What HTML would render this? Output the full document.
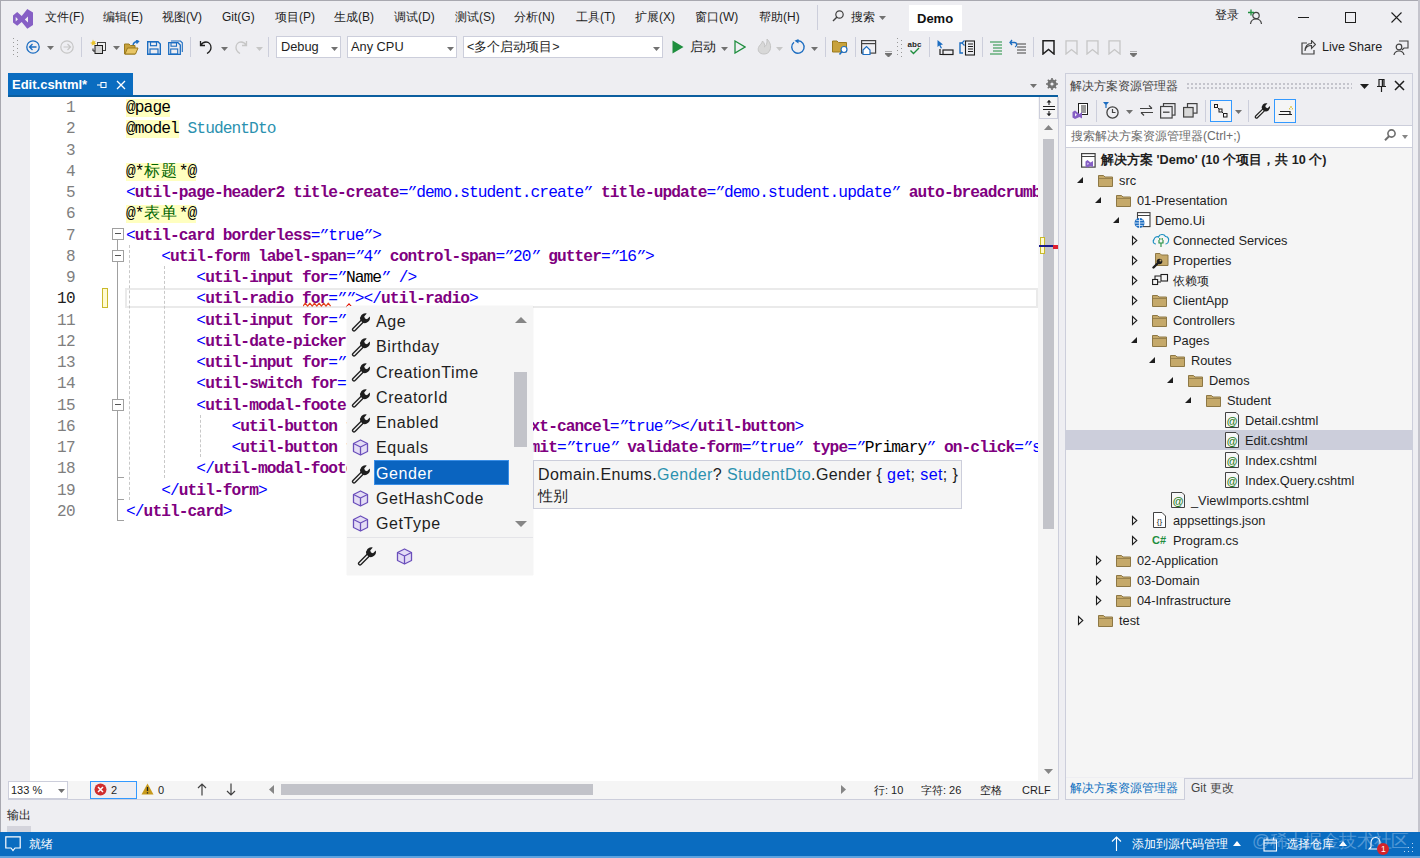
<!DOCTYPE html><html><head><meta charset="utf-8"><style>
*{box-sizing:border-box;margin:0;padding:0}
html,body{width:1420px;height:858px;overflow:hidden;background:#EEEEF2;font-family:"Liberation Sans",sans-serif;color:#1E1E1E;font-size:12px;position:relative}
.a{position:absolute}
.t{position:absolute;white-space:nowrap;line-height:1}
.code{position:absolute;font-family:"Liberation Mono",monospace;font-size:16.2px;letter-spacing:-0.92px;white-space:pre;height:21px;line-height:23px;color:#000}
.cj{display:inline-block;width:17.6px;letter-spacing:0;font-size:16px;text-align:left}
.tg{color:#800080;font-weight:bold}
.q{display:inline-block;width:8.8px;letter-spacing:0;transform:skewX(-28deg) scaleY(0.85);transform-origin:50% 30%;font-weight:normal}
.dl{color:#0000FF}
.vl{color:#0000FF}
.ra{background:#FFFFC0}
.cm{color:#006400}
.ty{color:#2B91AF}
.ln{position:absolute;left:30px;width:45px;text-align:right;font-family:"Liberation Mono",monospace;font-size:16px;letter-spacing:-0.6px;color:#6F6F6F;height:21px;line-height:23px}
.tr{position:absolute;font-size:12.8px;line-height:1;white-space:nowrap;color:#1E1E1E}
.cb{position:absolute;background:#fff;border:1px solid #CCCEDB;height:22px}
.pi{position:absolute;font-size:16px;letter-spacing:0.6px;line-height:1;white-space:nowrap;color:#1E1E1E}
</style></head><body>
<div class="a" style="left:0px;top:0px;width:1420px;height:1px;background:#A8A8B0;"></div>
<div class="a" style="left:0px;top:0px;width:1px;height:858px;background:#A8A8B0;"></div>
<div class="a" style="left:1418px;top:0px;width:2px;height:858px;background:#C4C4CC;"></div>
<svg class="a" style="left:13px;top:9px;" width="20" height="20" viewBox="0 0 20 20"><path d="M0 6.5 L4.2 3 L8.7 7 L14.3 0 L20 3.5 V16 L14.3 19.8 L8.7 13 L4.2 16.7 L0 13.5 Z M2.7 8 L5 10.2 L2.7 12.5 Z M15 7.5 L11.8 10.5 L15 13.5 Z" fill="#865FC5" fill-rule="evenodd"/></svg>
<div class="t" style="left:45px;top:11px;">文件(F)</div>
<div class="t" style="left:103px;top:11px;">编辑(E)</div>
<div class="t" style="left:162px;top:11px;">视图(V)</div>
<div class="t" style="left:222px;top:11px;">Git(G)</div>
<div class="t" style="left:275px;top:11px;">项目(P)</div>
<div class="t" style="left:334px;top:11px;">生成(B)</div>
<div class="t" style="left:394px;top:11px;">调试(D)</div>
<div class="t" style="left:455px;top:11px;">测试(S)</div>
<div class="t" style="left:514px;top:11px;">分析(N)</div>
<div class="t" style="left:576px;top:11px;">工具(T)</div>
<div class="t" style="left:635px;top:11px;">扩展(X)</div>
<div class="t" style="left:695px;top:11px;">窗口(W)</div>
<div class="t" style="left:759px;top:11px;">帮助(H)</div>
<div class="a" style="left:817px;top:5px;width:1px;height:25px;background:#CCCEDB"></div>
<svg class="a" style="left:832px;top:10px;" width="12" height="12" viewBox="0 0 12 12"><circle cx="7.5" cy="4.5" r="3.7" fill="none" stroke="#424242" stroke-width="1.2"/><path d="M5 7 L1 11" stroke="#424242" stroke-width="1.5"/></svg>
<div class="t" style="left:851px;top:11px;">搜索</div>
<svg class="a" style="left:879px;top:16px;" width="7" height="4" viewBox="0 0 7 4"><path d="M0 0H7L3.5 4Z" fill="#717171"/></svg>
<div class="a" style="left:909px;top:5px;width:53px;height:26px;background:#FFFFFF;"></div>
<div class="t" style="left:917px;top:11.5px;font-weight:bold;font-size:13px;color:#111">Demo</div>
<div class="t" style="left:1215px;top:9px;">登录</div>
<svg class="a" style="left:1247px;top:9px;" width="16" height="16" viewBox="0 0 16 16"><circle cx="9" cy="6.5" r="3.2" fill="none" stroke="#424242" stroke-width="1.2"/><path d="M3.5 15 C4 11 6.5 10 9 10 C11.5 10 14 11 14.5 15" fill="none" stroke="#424242" stroke-width="1.2"/><path d="M1 3.5 H7 M4 0.5 V6.5" stroke="#1E8E3E" stroke-width="1.3"/></svg>
<div class="a" style="left:1298px;top:17px;width:11px;height:1px;background:#1E1E1E;"></div>
<svg class="a" style="left:1345px;top:12px;" width="11" height="11" viewBox="0 0 11 11"><rect x="0.5" y="0.5" width="10" height="10" fill="none" stroke="#1E1E1E" stroke-width="1"/></svg>
<svg class="a" style="left:1391px;top:12px;" width="11" height="11" viewBox="0 0 11 11"><path d="M0.5 0.5 L10.5 10.5 M10.5 0.5 L0.5 10.5" stroke="#1E1E1E" stroke-width="1.1"/></svg>
<div class="a" style="left:13px;top:38px;width:1px;height:1px;background:#999"></div>
<div class="a" style="left:17px;top:40px;width:1px;height:1px;background:#999"></div>
<div class="a" style="left:13px;top:42px;width:1px;height:1px;background:#999"></div>
<div class="a" style="left:17px;top:44px;width:1px;height:1px;background:#999"></div>
<div class="a" style="left:13px;top:46px;width:1px;height:1px;background:#999"></div>
<div class="a" style="left:17px;top:48px;width:1px;height:1px;background:#999"></div>
<div class="a" style="left:13px;top:50px;width:1px;height:1px;background:#999"></div>
<div class="a" style="left:17px;top:52px;width:1px;height:1px;background:#999"></div>
<div class="a" style="left:13px;top:54px;width:1px;height:1px;background:#999"></div>
<div class="a" style="left:17px;top:56px;width:1px;height:1px;background:#999"></div>
<svg class="a" style="left:26px;top:40px;" width="14" height="14" viewBox="0 0 14 14"><circle cx="7" cy="7" r="6.2" fill="none" stroke="#1C6DC1" stroke-width="1.3"/><path d="M10.5 7 H3.5 M6.5 4 L3.5 7 L6.5 10" fill="none" stroke="#1C6DC1" stroke-width="1.3"/></svg>
<svg class="a" style="left:47px;top:46px;" width="7" height="4" viewBox="0 0 7 4"><path d="M0 0H7L3.5 4Z" fill="#717171"/></svg>
<svg class="a" style="left:60px;top:40px;" width="14" height="14" viewBox="0 0 14 14"><circle cx="7" cy="7" r="6.2" fill="none" stroke="#C6C6C6" stroke-width="1.2"/><path d="M3.5 7 H10.5 M7.5 4 L10.5 7 L7.5 10" fill="none" stroke="#C6C6C6" stroke-width="1.2"/></svg>
<div class="a" style="left:81px;top:37px;width:1px;height:20px;background:#CCCEDB"></div>
<svg class="a" style="left:90px;top:39px;" width="17" height="17" viewBox="0 0 17 17"><path d="M3 0.5 L3.8 2.4 L5.8 1.7 L4.8 3.5 L6.6 4.5 L4.6 4.9 L4.8 7 L3.3 5.6 L1.6 6.8 L2 4.8 L0 4 L2 3.2 Z" fill="#E8C228"/><rect x="7.5" y="3.5" width="8" height="8" fill="#F0F0F0" stroke="#424242"/><rect x="5" y="6.5" width="7.5" height="8" fill="#D4D4D4" stroke="#1E1E1E"/><path d="M3 9.5 V12 H5" fill="none" stroke="#1E1E1E"/></svg>
<svg class="a" style="left:113px;top:46px;" width="7" height="4" viewBox="0 0 7 4"><path d="M0 0H7L3.5 4Z" fill="#717171"/></svg>
<svg class="a" style="left:124px;top:40px;" width="17" height="15" viewBox="0 0 17 15"><path d="M0.5 4 H5 L6.5 5.5 H11 V14 H0.5 Z" fill="#C8A23C" stroke="#9A7A1E"/><path d="M1 14 L3.5 8 H14 L11.5 14 Z" fill="#E8C565" stroke="#9A7A1E"/><path d="M9 5 C9.5 2.5 11.5 1.5 14 1.5 M12 0 L14.5 1.5 L12.5 3.5" fill="none" stroke="#1C6DC1" stroke-width="1.4"/></svg>
<svg class="a" style="left:147px;top:41px;" width="14" height="14" viewBox="0 0 14 14"><path d="M0.7 0.7 H11 L13.3 3 V13.3 H0.7 Z" fill="none" stroke="#1C6DC1" stroke-width="1.4"/><rect x="3.5" y="0.7" width="6" height="4" fill="none" stroke="#1C6DC1" stroke-width="1.2"/><rect x="3" y="8" width="8" height="5.3" fill="none" stroke="#1C6DC1" stroke-width="1.2"/></svg>
<svg class="a" style="left:168px;top:40px;" width="15" height="15" viewBox="0 0 15 15"><path d="M3 1 H12.5 L14.3 2.8 V12" fill="none" stroke="#1C6DC1" stroke-width="1.1"/><path d="M0.7 2.7 H10 L12.3 5 V14.3 H0.7 Z" fill="none" stroke="#1C6DC1" stroke-width="1.3"/><rect x="3" y="2.7" width="5.5" height="3.5" fill="none" stroke="#1C6DC1" stroke-width="1.1"/><rect x="2.7" y="9" width="7" height="5" fill="none" stroke="#1C6DC1" stroke-width="1.1"/></svg>
<div class="a" style="left:190px;top:37px;width:1px;height:20px;background:#CCCEDB"></div>
<svg class="a" style="left:199px;top:40px;" width="13" height="14" viewBox="0 0 13 14"><path d="M1.5 1 V5.5 H6 M1.8 5.3 C3 3 5 2 7 2 C10 2 12 4.5 12 7.5 C12 10 10.5 12 8 13.5" fill="none" stroke="#1E1E1E" stroke-width="1.3"/></svg>
<svg class="a" style="left:221px;top:47px;" width="7" height="4" viewBox="0 0 7 4"><path d="M0 0H7L3.5 4Z" fill="#717171"/></svg>
<svg class="a" style="left:234px;top:40px;" width="14" height="14" viewBox="0 0 14 14"><path d="M12.5 1 V5.5 H8 M12.2 5.3 C11 3 9 2 7 2 C4 2 2 4.5 2 7.5 C2 10 3.5 12 6 13.5" fill="none" stroke="#C6C6C6" stroke-width="1.3"/></svg>
<svg class="a" style="left:256px;top:47px;" width="7" height="4" viewBox="0 0 7 4"><path d="M0 0H7L3.5 4Z" fill="#C6C6C6"/></svg>
<div class="a" style="left:268px;top:37px;width:1px;height:20px;background:#CCCEDB"></div>
<div class="cb" style="left:276px;top:36px;width:65px"></div>
<div class="t" style="left:281px;top:41px;font-size:12.8px">Debug</div>
<svg class="a" style="left:331px;top:47px;" width="7" height="4" viewBox="0 0 7 4"><path d="M0 0H7L3.5 4Z" fill="#717171"/></svg>
<div class="cb" style="left:347px;top:36px;width:110px"></div>
<div class="t" style="left:351px;top:41px;font-size:12.8px">Any CPU</div>
<svg class="a" style="left:447px;top:47px;" width="7" height="4" viewBox="0 0 7 4"><path d="M0 0H7L3.5 4Z" fill="#717171"/></svg>
<div class="cb" style="left:463px;top:36px;width:200px"></div>
<div class="t" style="left:467px;top:41px;font-size:12.5px">&lt;多个启动项目&gt;</div>
<svg class="a" style="left:653px;top:47px;" width="7" height="4" viewBox="0 0 7 4"><path d="M0 0H7L3.5 4Z" fill="#717171"/></svg>
<svg class="a" style="left:672px;top:40px;" width="12" height="14" viewBox="0 0 12 14"><path d="M0.5 0.5 L11.5 7 L0.5 13.5 Z" fill="#1E8E3E"/></svg>
<div class="t" style="left:690px;top:41px;font-size:12.5px">启动</div>
<svg class="a" style="left:721px;top:47px;" width="7" height="4" viewBox="0 0 7 4"><path d="M0 0H7L3.5 4Z" fill="#717171"/></svg>
<svg class="a" style="left:734px;top:40px;" width="12" height="14" viewBox="0 0 12 14"><path d="M1 1 L11 7 L1 13 Z" fill="none" stroke="#1E8E3E" stroke-width="1.3"/></svg>
<svg class="a" style="left:756px;top:38px;" width="16" height="17" viewBox="0 0 16 17"><path d="M8 16 C3 16 1.5 12.5 2.5 9.5 C3.5 6.5 6 6 6.5 3 C8.5 5 9 7 8.5 9 C10 8 11.5 5.5 11 1 C14 4 15.5 8 14 12 C13 14.5 11 16 8 16 Z" fill="#D8D8D8" stroke="#C4C4C4"/></svg>
<svg class="a" style="left:776px;top:47px;" width="7" height="4" viewBox="0 0 7 4"><path d="M0 0H7L3.5 4Z" fill="#C6C6C6"/></svg>
<svg class="a" style="left:790px;top:39px;" width="16" height="16" viewBox="0 0 16 16"><path d="M4 3.2 A6.2 6.2 0 1 0 8 1.8" fill="none" stroke="#1C6DC1" stroke-width="1.4"/><path d="M8.5 0 V4.5 L4.5 1.8 Z" fill="#1C6DC1"/></svg>
<svg class="a" style="left:811px;top:47px;" width="7" height="4" viewBox="0 0 7 4"><path d="M0 0H7L3.5 4Z" fill="#717171"/></svg>
<div class="a" style="left:825px;top:37px;width:1px;height:20px;background:#CCCEDB"></div>
<svg class="a" style="left:832px;top:39px;" width="17" height="17" viewBox="0 0 17 17"><path d="M0.5 2 H5 L6.5 3.5 H14.5 V13 H0.5 Z" fill="#C8A23C" stroke="#9A7A1E"/><circle cx="12" cy="10.5" r="3" fill="#fff" stroke="#1C6DC1" stroke-width="1.2"/><path d="M10 12.5 L7.5 15.5" stroke="#1C6DC1" stroke-width="1.5"/></svg>
<div class="a" style="left:855px;top:37px;width:1px;height:20px;background:#CCCEDB"></div>
<svg class="a" style="left:861px;top:40px;" width="17" height="15" viewBox="0 0 17 15"><rect x="0.6" y="0.6" width="14" height="12.5" fill="none" stroke="#424242" stroke-width="1.2"/><path d="M0.6 3.6 H14.6" stroke="#424242" stroke-width="1.2"/><path d="M2 10 L5.5 6.5 L9 10 V14.5 H2 Z" fill="#fff" stroke="#1C6DC1" stroke-width="1.2"/></svg>
<svg class="a" style="left:885px;top:51px;" width="7" height="6" viewBox="0 0 7 6"><path d="M0 0 H7 M0 2.5 H7 L3.5 6 Z" stroke="#717171" fill="#717171"/></svg>
<div class="a" style="left:897px;top:38px;width:1px;height:1px;background:#999"></div>
<div class="a" style="left:901px;top:40px;width:1px;height:1px;background:#999"></div>
<div class="a" style="left:897px;top:42px;width:1px;height:1px;background:#999"></div>
<div class="a" style="left:901px;top:44px;width:1px;height:1px;background:#999"></div>
<div class="a" style="left:897px;top:46px;width:1px;height:1px;background:#999"></div>
<div class="a" style="left:901px;top:48px;width:1px;height:1px;background:#999"></div>
<div class="a" style="left:897px;top:50px;width:1px;height:1px;background:#999"></div>
<div class="a" style="left:901px;top:52px;width:1px;height:1px;background:#999"></div>
<div class="a" style="left:897px;top:54px;width:1px;height:1px;background:#999"></div>
<div class="a" style="left:901px;top:56px;width:1px;height:1px;background:#999"></div>
<svg class="a" style="left:906px;top:39px;" width="17" height="17" viewBox="0 0 17 17"><text x="8.5" y="8" font-family="Liberation Sans" font-size="8" font-weight="bold" fill="#1E1E1E" text-anchor="middle">abc</text><path d="M4.5 11.5 L7.5 14.5 L13 9" fill="none" stroke="#1E8E3E" stroke-width="1.4"/></svg>
<div class="a" style="left:929px;top:37px;width:1px;height:20px;background:#CCCEDB"></div>
<svg class="a" style="left:937px;top:40px;" width="17" height="16" viewBox="0 0 17 16"><path d="M0.5 0 L6 4.5 L3.5 5 L5 8 L3.8 8.5 L2.3 5.5 L0.5 7 Z" fill="#1C6DC1"/><path d="M3 9 V14.5 H16" fill="none" stroke="#1E1E1E" stroke-width="1.2"/><rect x="6" y="10" width="10" height="4.5" fill="none" stroke="#1E1E1E" stroke-width="1.2"/></svg>
<svg class="a" style="left:959px;top:40px;" width="16" height="16" viewBox="0 0 16 16"><path d="M4 3 H1 V13 H4" fill="none" stroke="#1C6DC1" stroke-width="1.4"/><path d="M3 3 L5.5 0.5 M3 3 L5.5 5.5" stroke="#1C6DC1" stroke-width="1.2"/><rect x="6.5" y="1" width="9" height="14" fill="none" stroke="#1E1E1E" stroke-width="1.1"/><path d="M9 4 H14 M9 6.5 H14 M9 9 H14 M9 11.5 H14" stroke="#1E1E1E"/></svg>
<div class="a" style="left:982px;top:37px;width:1px;height:20px;background:#CCCEDB"></div>
<svg class="a" style="left:990px;top:41px;" width="14" height="14" viewBox="0 0 14 14"><path d="M0 1 H12 M3 4 H12 M3 7 H12 M3 10 H12 M0 13 H12" stroke="#1E8E3E" stroke-width="1.2"/></svg>
<svg class="a" style="left:1009px;top:39px;" width="18" height="16" viewBox="0 0 18 16"><path d="M3 1 L1 3.5 L3 6 M1.5 3.5 H5.5 C8 3.5 8.5 7 6 8" fill="none" stroke="#1C6DC1" stroke-width="1.3"/><path d="M8 5 H17 M8 8 H17 M8 11 H17 M8 14 H17" stroke="#424242" stroke-width="1.1"/></svg>
<div class="a" style="left:1033px;top:37px;width:1px;height:20px;background:#CCCEDB"></div>
<svg class="a" style="left:1042px;top:40px;" width="13" height="15" viewBox="0 0 13 15"><path d="M1 0.8 H12 V14 L6.5 9.5 L1 14 Z" fill="none" stroke="#1E1E1E" stroke-width="1.5"/></svg>
<svg class="a" style="left:1064px;top:40px;" width="14" height="15" viewBox="0 0 14 15"><path d="M2 0.8 H13 V14 L7.5 9.5 L2 14 Z" fill="none" stroke="#C6C6C6" stroke-width="1.3"/></svg>
<svg class="a" style="left:1085px;top:40px;" width="14" height="15" viewBox="0 0 14 15"><path d="M2 0.8 H13 V14 L7.5 9.5 L2 14 Z" fill="none" stroke="#C6C6C6" stroke-width="1.3"/></svg>
<svg class="a" style="left:1107px;top:40px;" width="14" height="15" viewBox="0 0 14 15"><path d="M2 0.8 H13 V14 L7.5 9.5 L2 14 Z" fill="none" stroke="#C6C6C6" stroke-width="1.3"/></svg>
<svg class="a" style="left:1130px;top:51px;" width="7" height="6" viewBox="0 0 7 6"><path d="M0 0 H7 M0 2.5 H7 L3.5 6 Z" stroke="#717171" fill="#717171"/></svg>
<svg class="a" style="left:1301px;top:40px;" width="15" height="15" viewBox="0 0 15 15"><path d="M6 3 H1 V14 H13 V10" fill="none" stroke="#424242" stroke-width="1.2"/><path d="M4 11 C4.5 7 7 5.5 10.5 5.5 V8.5 L14.5 4.5 L10.5 0.5 V3.5 C6 3.5 4 6.5 4 11 Z" fill="none" stroke="#424242" stroke-width="1.1"/></svg>
<div class="t" style="left:1322px;top:41px;font-size:12.6px">Live Share</div>
<svg class="a" style="left:1393px;top:40px;" width="16" height="16" viewBox="0 0 16 16"><circle cx="6" cy="7" r="2.8" fill="none" stroke="#424242" stroke-width="1.2"/><path d="M1 15 C1.5 12 3.5 11 6 11 C8.5 11 10.5 12 11 15" fill="none" stroke="#424242" stroke-width="1.2"/><path d="M6 1 H15 V8 H11 L9 10" fill="none" stroke="#424242" stroke-width="1.1"/></svg>
<div class="a" style="left:8px;top:73px;width:125px;height:24px;background:#0A6CC0;"></div>
<div class="t" style="left:12px;top:78px;color:#fff;font-weight:bold;font-size:13px">Edit.cshtml*</div>
<svg class="a" style="left:97px;top:81px;" width="10" height="8" viewBox="0 0 10 8"><path d="M0 4 H4 M4 1 V7 M4 1.5 H9 V6.5 H4" fill="none" stroke="#fff" stroke-width="1.1"/></svg>
<svg class="a" style="left:116px;top:80px;" width="10" height="10" viewBox="0 0 10 10"><path d="M1 1 L9 9 M9 1 L1 9" stroke="#fff" stroke-width="1.3"/></svg>
<div class="a" style="left:8px;top:95px;width:1050px;height:2px;background:#0B5E9F;"></div>
<svg class="a" style="left:1030px;top:84px;" width="7" height="4" viewBox="0 0 7 4"><path d="M0 0H7L3.5 4Z" fill="#717171"/></svg>
<svg class="a" style="left:1046px;top:78px;" width="12" height="12" viewBox="0 0 12 12"><circle cx="6" cy="6" r="3.5" fill="none" stroke="#717171" stroke-width="2.2"/><path d="M6 0 V12 M0 6 H12 M1.8 1.8 L10.2 10.2 M10.2 1.8 L1.8 10.2" stroke="#717171" stroke-width="1.6"/><circle cx="6" cy="6" r="1.6" fill="#EEEEF2"/></svg>
<div class="a" style="left:8px;top:97px;width:1032px;height:684px;background:#FFFFFF;"></div>
<div class="a" style="left:8px;top:97px;width:22px;height:684px;background:#EEEEF2;"></div>
<div class="a" style="left:125px;top:288px;width:913px;height:20px;border:2px solid #EAEAEA"></div>
<div class="a" style="left:102px;top:288px;width:6px;height:20px;border:1px solid #C9B92A;background:#FFFBD0"></div>
<div class="a" style="left:112px;top:228px;width:12px;height:12px;border:1px solid #A0A0A0;background:#fff"></div>
<div class="a" style="left:115px;top:233px;width:6px;height:1px;background:#555;"></div>
<div class="a" style="left:112px;top:250px;width:12px;height:12px;border:1px solid #A0A0A0;background:#fff"></div>
<div class="a" style="left:115px;top:255px;width:6px;height:1px;background:#555;"></div>
<div class="a" style="left:112px;top:399px;width:12px;height:12px;border:1px solid #A0A0A0;background:#fff"></div>
<div class="a" style="left:115px;top:404px;width:6px;height:1px;background:#555;"></div>
<div class="a" style="left:117px;top:240px;width:1px;height:10px;background:#A0A0A0;"></div>
<div class="a" style="left:117px;top:262px;width:1px;height:137px;background:#A0A0A0;"></div>
<div class="a" style="left:117px;top:411px;width:1px;height:110px;background:#A0A0A0;"></div>
<div class="a" style="left:117px;top:520px;width:7px;height:1px;background:#A0A0A0;"></div>
<div class="a" style="left:117px;top:499px;width:7px;height:1px;background:#A0A0A0;"></div>
<div class="a" style="left:117px;top:477px;width:7px;height:1px;background:#A0A0A0;"></div>
<div class="a" style="left:129px;top:245px;width:1px;height:255px;border-left:1px dashed #C8C8C8"></div>
<div class="a" style="left:164px;top:266px;width:1px;height:212px;border-left:1px dashed #C8C8C8"></div>
<div class="a" style="left:200px;top:415px;width:1px;height:42px;border-left:1px dashed #C8C8C8"></div>
<div class="a" style="left:0;top:0;width:1039px;height:778px;overflow:hidden">
<div class="ln" style="top:97.00px;color:#7E7E7E">1</div>
<div class="code" style="left:126px;top:97.00px"><span class="ra">@page</span></div>
<div class="ln" style="top:118.26px;color:#7E7E7E">2</div>
<div class="code" style="left:126px;top:118.26px"><span class="ra">@model</span> <span class="ty">StudentDto</span></div>
<div class="ln" style="top:139.53px;color:#7E7E7E">3</div>
<div class="code" style="left:126px;top:139.53px"></div>
<div class="ln" style="top:160.79px;color:#7E7E7E">4</div>
<div class="code" style="left:126px;top:160.79px"><span class="ra">@*<span class="cm"><span class="cj">标</span><span class="cj">题</span></span>*@</span></div>
<div class="ln" style="top:182.05px;color:#7E7E7E">5</div>
<div class="code" style="left:126px;top:182.05px"><span class="dl">&lt;</span><span class="tg">util-page-header2 title-create</span><span class="dl">=</span><span class="vl"><span class="q">&quot;</span>demo.student.create<span class="q">&quot;</span></span> <span class="tg">title-update</span><span class="dl">=</span><span class="vl"><span class="q">&quot;</span>demo.student.update<span class="q">&quot;</span></span> <span class="tg">auto-breadcrumb=<span class="q">&quot;</span>true<span class="q">&quot;</span></span></div>
<div class="ln" style="top:203.31px;color:#7E7E7E">6</div>
<div class="code" style="left:126px;top:203.31px"><span class="ra">@*<span class="cm"><span class="cj">表</span><span class="cj">单</span></span>*@</span></div>
<div class="ln" style="top:224.58px;color:#7E7E7E">7</div>
<div class="code" style="left:126px;top:224.58px"><span class="dl">&lt;</span><span class="tg">util-card borderless</span><span class="dl">=</span><span class="vl"><span class="q">&quot;</span>true<span class="q">&quot;</span></span><span class="dl">&gt;</span></div>
<div class="ln" style="top:245.84px;color:#7E7E7E">8</div>
<div class="code" style="left:126px;top:245.84px">    <span class="dl">&lt;</span><span class="tg">util-form label-span</span><span class="dl">=</span><span class="vl"><span class="q">&quot;</span>4<span class="q">&quot;</span></span> <span class="tg">control-span</span><span class="dl">=</span><span class="vl"><span class="q">&quot;</span>20<span class="q">&quot;</span></span> <span class="tg">gutter</span><span class="dl">=</span><span class="vl"><span class="q">&quot;</span>16<span class="q">&quot;</span></span><span class="dl">&gt;</span></div>
<div class="ln" style="top:267.10px;color:#7E7E7E">9</div>
<div class="code" style="left:126px;top:267.10px">        <span class="dl">&lt;</span><span class="tg">util-input for</span><span class="dl">=</span><span class="vl"><span class="q">&quot;</span></span>Name<span class="vl"><span class="q">&quot;</span></span> <span class="dl">/&gt;</span></div>
<div class="ln" style="top:288.37px;color:#1E1E1E">10</div>
<div class="code" style="left:126px;top:288.37px">        <span class="dl">&lt;</span><span class="tg">util-radio for</span><span class="dl">=</span><span class="vl"><span class="q">&quot;</span><span class="q">&quot;</span></span><span class="dl">&gt;&lt;/</span><span class="tg">util-radio</span><span class="dl">&gt;</span></div>
<div class="ln" style="top:309.63px;color:#7E7E7E">11</div>
<div class="code" style="left:126px;top:309.63px">        <span class="dl">&lt;</span><span class="tg">util-input for</span><span class="dl">=</span><span class="vl"><span class="q">&quot;</span></span></div>
<div class="ln" style="top:330.89px;color:#7E7E7E">12</div>
<div class="code" style="left:126px;top:330.89px">        <span class="dl">&lt;</span><span class="tg">util-date-picker for</span><span class="dl">=</span></div>
<div class="ln" style="top:352.16px;color:#7E7E7E">13</div>
<div class="code" style="left:126px;top:352.16px">        <span class="dl">&lt;</span><span class="tg">util-input for</span><span class="dl">=</span><span class="vl"><span class="q">&quot;</span></span></div>
<div class="ln" style="top:373.42px;color:#7E7E7E">14</div>
<div class="code" style="left:126px;top:373.42px">        <span class="dl">&lt;</span><span class="tg">util-switch for</span><span class="dl">=</span></div>
<div class="ln" style="top:394.68px;color:#7E7E7E">15</div>
<div class="code" style="left:126px;top:394.68px">        <span class="dl">&lt;</span><span class="tg">util-modal-footer</span></div>
<div class="ln" style="top:415.95px;color:#7E7E7E">16</div>
<div class="code" style="left:126px;top:415.95px">            <span class="dl">&lt;</span><span class="tg">util-button text=<span class="q">&quot;</span>Cancel12345<span class="q">&quot;</span> te</span><span class="tg">xt-cancel</span><span class="dl">=</span><span class="vl"><span class="q">&quot;</span>true<span class="q">&quot;</span></span><span class="dl">&gt;&lt;/</span><span class="tg">util-button</span><span class="dl">&gt;</span></div>
<div class="ln" style="top:437.21px;color:#7E7E7E">17</div>
<div class="code" style="left:126px;top:437.21px">            <span class="dl">&lt;</span><span class="tg">util-button text=<span class="q">&quot;</span>Ok12345<span class="q">&quot;</span> is-sub</span><span class="tg">mit</span><span class="dl">=</span><span class="vl"><span class="q">&quot;</span>true<span class="q">&quot;</span></span> <span class="tg">validate-form</span><span class="dl">=</span><span class="vl"><span class="q">&quot;</span>true<span class="q">&quot;</span></span> <span class="tg">type</span><span class="dl">=</span><span class="vl"><span class="q">&quot;</span></span>Primary<span class="vl"><span class="q">&quot;</span></span> <span class="tg">on-click</span><span class="dl">=</span><span class="vl"><span class="q">&quot;</span>submit<span class="q">&quot;</span></span></div>
<div class="ln" style="top:458.47px;color:#7E7E7E">18</div>
<div class="code" style="left:126px;top:458.47px">        <span class="dl">&lt;/</span><span class="tg">util-modal-footer</span></div>
<div class="ln" style="top:479.73px;color:#7E7E7E">19</div>
<div class="code" style="left:126px;top:479.73px">    <span class="dl">&lt;/</span><span class="tg">util-form</span><span class="dl">&gt;</span></div>
<div class="ln" style="top:501.00px;color:#7E7E7E">20</div>
<div class="code" style="left:126px;top:501.00px"><span class="dl">&lt;/</span><span class="tg">util-card</span><span class="dl">&gt;</span></div>
</div>
<svg class="a" style="left:303px;top:302px;" width="29" height="6" viewBox="0 0 29 6"><path d="M0 4.2 L2.3 1.2 L4.6 4.2 L6.9 1.2 L9.2 4.2 L11.5 1.2 L13.8 4.2 L16.1 1.2 L18.4 4.2 L20.7 1.2 L23.0 4.2 L25.3 1.2 L27.6 4.2" fill="none" stroke="#E3401A" stroke-width="1.2" stroke-linejoin="round"/></svg>
<svg class="a" style="left:346px;top:303px;" width="6" height="4" viewBox="0 0 6 4"><path d="M0.5 3.5 L3 0.8 L5.5 3.5" fill="none" stroke="#E51400" stroke-width="1.1"/></svg>
<div class="a" style="left:1038px;top:97px;width:20px;height:684px;background:#F5F5F5;"></div>
<div class="a" style="left:1058px;top:97px;width:1px;height:703px;background:#CCCEDB;"></div>
<div class="a" style="left:1039px;top:97px;width:19px;height:22px;border:1px solid #CCCEDB;border-top:none;background:#F5F5F5"></div>
<svg class="a" style="left:1043px;top:100px;" width="12" height="16" viewBox="0 0 12 16"><path d="M0 6.5 H12 M0 9.5 H12" stroke="#1E1E1E" stroke-width="1.1"/><path d="M6 0.5 V5 M6 11 V15.5" stroke="#1E1E1E" stroke-width="1.1"/><path d="M3.5 2.5 L6 0 L8.5 2.5 Z M3.5 13.5 L6 16 L8.5 13.5 Z" fill="#1E1E1E"/></svg>
<svg class="a" style="left:1044px;top:125px;" width="9" height="5" viewBox="0 0 9 5"><path d="M0 5H9L4.5 0Z" fill="#868686"/></svg>
<div class="a" style="left:1043px;top:139px;width:11px;height:390px;background:#C2C3C9;"></div>
<svg class="a" style="left:1044px;top:769px;" width="9" height="5" viewBox="0 0 9 5"><path d="M0 0 H9 L4.5 5 Z" fill="#868686"/></svg>
<div class="a" style="left:1040px;top:237px;width:5px;height:17px;border:1px solid #C9B92A;background:#FFFBD0"></div>
<div class="a" style="left:1039px;top:245px;width:19px;height:2px;background:#1A1A8C;"></div>
<div class="a" style="left:1053px;top:245px;width:5px;height:4px;background:#E0202E;"></div>
<div class="a" style="left:8px;top:781px;width:1050px;height:19px;background:#F5F5F5;"></div>
<div class="a" style="left:8px;top:799px;width:1050px;height:1px;background:#CCCEDB;"></div>
<div class="a" style="left:8px;top:781px;width:60px;height:18px;background:#fff;border:1px solid #CCCEDB"></div>
<div class="t" style="left:11px;top:785px;font-size:11px">133 %</div>
<svg class="a" style="left:58px;top:789px;" width="7" height="4" viewBox="0 0 7 4"><path d="M0 0H7L3.5 4Z" fill="#717171"/></svg>
<div class="a" style="left:90px;top:781px;width:47px;height:18px;border:1px solid #3399FF;background:#EEEEF2"></div>
<svg class="a" style="left:94px;top:783px;" width="13" height="13" viewBox="0 0 13 13"><circle cx="6.5" cy="6.5" r="6" fill="#D02E2E"/><path d="M4 4 L9 9 M9 4 L4 9" stroke="#fff" stroke-width="1.5"/></svg>
<div class="t" style="left:111px;top:785px;font-size:11px">2</div>
<svg class="a" style="left:141px;top:783px;" width="13" height="12" viewBox="0 0 13 12"><path d="M6.5 0.5 L12.5 11.5 H0.5 Z" fill="#C79A1C"/><path d="M6.5 4 V8 M6.5 9.2 V10.5" stroke="#1E1E1E" stroke-width="1.3"/></svg>
<div class="t" style="left:158px;top:785px;font-size:11px">0</div>
<svg class="a" style="left:197px;top:783px;" width="10" height="13" viewBox="0 0 10 13"><path d="M5 1 V12.5 M1 5 L5 1 L9 5" fill="none" stroke="#424242" stroke-width="1.2"/></svg>
<svg class="a" style="left:226px;top:783px;" width="10" height="13" viewBox="0 0 10 13"><path d="M5 0.5 V12 M1 8 L5 12 L9 8" fill="none" stroke="#424242" stroke-width="1.2"/></svg>
<svg class="a" style="left:269px;top:785px;" width="5" height="9" viewBox="0 0 5 9"><path d="M5 0 V9 L0 4.5 Z" fill="#868686"/></svg>
<div class="a" style="left:281px;top:784px;width:312px;height:11px;background:#C2C3C9;"></div>
<svg class="a" style="left:841px;top:785px;" width="5" height="9" viewBox="0 0 5 9"><path d="M0 0 V9 L5 4.5 Z" fill="#868686"/></svg>
<div class="t" style="left:874px;top:785px;font-size:11px">行: 10</div>
<div class="t" style="left:921px;top:785px;font-size:11px">字符: 26</div>
<div class="t" style="left:980px;top:785px;font-size:11px">空格</div>
<div class="t" style="left:1022px;top:785px;font-size:11px">CRLF</div>
<div class="t" style="left:7px;top:809px;font-size:12px">输出</div>
<div class="a" style="left:7px;top:826px;width:24px;height:6px;background:#D4D4DC;"></div>
<div class="a" style="left:347px;top:306px;width:186px;height:269px;background:#F5F5F5;box-shadow:0 0 1px rgba(0,0,0,0.12)"></div>
<svg class="a" style="left:351px;top:312px;" width="20" height="20" viewBox="0 0 20 20"><g transform="scale(1.0)"><path d="M3 17.5 L11.2 9.3" stroke="#1E1E1E" stroke-width="4.2" stroke-linecap="round"/><path d="M3 17.5 L11.2 9.3" stroke="#F0F0F0" stroke-width="1.6" stroke-linecap="round"/><path d="M9.5 8.5 A5.2 5.2 0 0 1 15.8 1.6 L13.2 4.6 L14 6.6 L16 7.3 L18.8 4.6 A5.2 5.2 0 0 1 11.6 10.6 Z" fill="#1E1E1E"/></g></svg>
<div class="pi" style="left:376px;top:314.0px">Age</div>
<svg class="a" style="left:351px;top:337px;" width="20" height="20" viewBox="0 0 20 20"><g transform="scale(1.0)"><path d="M3 17.5 L11.2 9.3" stroke="#1E1E1E" stroke-width="4.2" stroke-linecap="round"/><path d="M3 17.5 L11.2 9.3" stroke="#F0F0F0" stroke-width="1.6" stroke-linecap="round"/><path d="M9.5 8.5 A5.2 5.2 0 0 1 15.8 1.6 L13.2 4.6 L14 6.6 L16 7.3 L18.8 4.6 A5.2 5.2 0 0 1 11.6 10.6 Z" fill="#1E1E1E"/></g></svg>
<div class="pi" style="left:376px;top:339.2px">Birthday</div>
<svg class="a" style="left:351px;top:362px;" width="20" height="20" viewBox="0 0 20 20"><g transform="scale(1.0)"><path d="M3 17.5 L11.2 9.3" stroke="#1E1E1E" stroke-width="4.2" stroke-linecap="round"/><path d="M3 17.5 L11.2 9.3" stroke="#F0F0F0" stroke-width="1.6" stroke-linecap="round"/><path d="M9.5 8.5 A5.2 5.2 0 0 1 15.8 1.6 L13.2 4.6 L14 6.6 L16 7.3 L18.8 4.6 A5.2 5.2 0 0 1 11.6 10.6 Z" fill="#1E1E1E"/></g></svg>
<div class="pi" style="left:376px;top:364.5px">CreationTime</div>
<svg class="a" style="left:351px;top:388px;" width="20" height="20" viewBox="0 0 20 20"><g transform="scale(1.0)"><path d="M3 17.5 L11.2 9.3" stroke="#1E1E1E" stroke-width="4.2" stroke-linecap="round"/><path d="M3 17.5 L11.2 9.3" stroke="#F0F0F0" stroke-width="1.6" stroke-linecap="round"/><path d="M9.5 8.5 A5.2 5.2 0 0 1 15.8 1.6 L13.2 4.6 L14 6.6 L16 7.3 L18.8 4.6 A5.2 5.2 0 0 1 11.6 10.6 Z" fill="#1E1E1E"/></g></svg>
<div class="pi" style="left:376px;top:389.8px">CreatorId</div>
<svg class="a" style="left:351px;top:413px;" width="20" height="20" viewBox="0 0 20 20"><g transform="scale(1.0)"><path d="M3 17.5 L11.2 9.3" stroke="#1E1E1E" stroke-width="4.2" stroke-linecap="round"/><path d="M3 17.5 L11.2 9.3" stroke="#F0F0F0" stroke-width="1.6" stroke-linecap="round"/><path d="M9.5 8.5 A5.2 5.2 0 0 1 15.8 1.6 L13.2 4.6 L14 6.6 L16 7.3 L18.8 4.6 A5.2 5.2 0 0 1 11.6 10.6 Z" fill="#1E1E1E"/></g></svg>
<div class="pi" style="left:376px;top:415.0px">Enabled</div>
<svg class="a" style="left:352px;top:439px;" width="17" height="17" viewBox="0 0 17 17"><g transform="scale(1.0)" stroke="#6B4FBB" stroke-width="1.3" stroke-linejoin="round" fill="none"><path d="M8.5 1 L15.5 4.5 V12.5 L8.5 16 L1.5 12.5 V4.5 Z" fill="#E4DDF5"/><path d="M1.5 4.5 L8.5 8 L15.5 4.5 M8.5 8 V16"/></g></svg>
<div class="pi" style="left:376px;top:440.2px">Equals</div>
<svg class="a" style="left:351px;top:464px;" width="20" height="20" viewBox="0 0 20 20"><g transform="scale(1.0)"><path d="M3 17.5 L11.2 9.3" stroke="#1E1E1E" stroke-width="4.2" stroke-linecap="round"/><path d="M3 17.5 L11.2 9.3" stroke="#F0F0F0" stroke-width="1.6" stroke-linecap="round"/><path d="M9.5 8.5 A5.2 5.2 0 0 1 15.8 1.6 L13.2 4.6 L14 6.6 L16 7.3 L18.8 4.6 A5.2 5.2 0 0 1 11.6 10.6 Z" fill="#1E1E1E"/></g></svg>
<div class="a" style="left:374px;top:460px;width:135px;height:25px;background:#0A64C0;border:1px solid #3A8EE6"></div>
<div class="pi" style="left:376px;top:465.5px;color:#fff">Gender</div>
<svg class="a" style="left:352px;top:490px;" width="17" height="17" viewBox="0 0 17 17"><g transform="scale(1.0)" stroke="#6B4FBB" stroke-width="1.3" stroke-linejoin="round" fill="none"><path d="M8.5 1 L15.5 4.5 V12.5 L8.5 16 L1.5 12.5 V4.5 Z" fill="#E4DDF5"/><path d="M1.5 4.5 L8.5 8 L15.5 4.5 M8.5 8 V16"/></g></svg>
<div class="pi" style="left:376px;top:490.8px">GetHashCode</div>
<svg class="a" style="left:352px;top:515px;" width="17" height="17" viewBox="0 0 17 17"><g transform="scale(1.0)" stroke="#6B4FBB" stroke-width="1.3" stroke-linejoin="round" fill="none"><path d="M8.5 1 L15.5 4.5 V12.5 L8.5 16 L1.5 12.5 V4.5 Z" fill="#E4DDF5"/><path d="M1.5 4.5 L8.5 8 L15.5 4.5 M8.5 8 V16"/></g></svg>
<div class="pi" style="left:376px;top:516.0px">GetType</div>
<svg class="a" style="left:515px;top:317px;" width="12" height="6" viewBox="0 0 12 6"><path d="M0 6H12L6.0 0Z" fill="#868686"/></svg>
<div class="a" style="left:514px;top:372px;width:13px;height:75px;background:#C2C3C9;"></div>
<svg class="a" style="left:515px;top:521px;" width="12" height="6" viewBox="0 0 12 6"><path d="M0 0 H12 L6 6 Z" fill="#868686"/></svg>
<div class="a" style="left:347px;top:537px;width:186px;height:1px;background:#E4E4E8;"></div>
<svg class="a" style="left:357px;top:546px;" width="20" height="20" viewBox="0 0 20 20"><g transform="scale(1.0)"><path d="M3 17.5 L11.2 9.3" stroke="#1E1E1E" stroke-width="4.2" stroke-linecap="round"/><path d="M3 17.5 L11.2 9.3" stroke="#F0F0F0" stroke-width="1.6" stroke-linecap="round"/><path d="M9.5 8.5 A5.2 5.2 0 0 1 15.8 1.6 L13.2 4.6 L14 6.6 L16 7.3 L18.8 4.6 A5.2 5.2 0 0 1 11.6 10.6 Z" fill="#1E1E1E"/></g></svg>
<svg class="a" style="left:396px;top:548px;" width="17" height="17" viewBox="0 0 17 17"><g transform="scale(1.0)" stroke="#6B4FBB" stroke-width="1.3" stroke-linejoin="round" fill="none"><path d="M8.5 1 L15.5 4.5 V12.5 L8.5 16 L1.5 12.5 V4.5 Z" fill="#E4DDF5"/><path d="M1.5 4.5 L8.5 8 L15.5 4.5 M8.5 8 V16"/></g></svg>
<div class="a" style="left:533px;top:460px;width:429px;height:49px;background:#F5F5F5;border:1px solid #CCCEDB"></div>
<div class="t" style="left:538px;top:467px;font-size:16px;letter-spacing:0.4px">Domain.Enums.<span style="color:#2B91AF">Gender</span>? <span style="color:#2B91AF">StudentDto</span>.Gender { <span style="color:#0000FF">get</span>; <span style="color:#0000FF">set</span>; }</div>
<div class="t" style="left:538px;top:488px;font-size:15px">性别</div>
<div class="a" style="left:1065px;top:73px;width:348px;height:706px;background:#EEEEF2;border:1px solid #CCCEDB;border-bottom:none"></div>
<div class="t" style="left:1070px;top:80px;font-size:12px;color:#444">解决方案资源管理器</div>
<div class="a" style="left:1186px;top:82px;width:166px;height:8px;background-image:radial-gradient(#C4C4CC 0.75px, transparent 0.9px);background-size:4px 4px"></div>
<svg class="a" style="left:1360px;top:84px;" width="9" height="5" viewBox="0 0 9 5"><path d="M0 0 H9 L4.5 5 Z" fill="#1E1E1E"/></svg>
<svg class="a" style="left:1377px;top:79px;" width="9" height="13" viewBox="0 0 9 13"><path d="M2 0.5 H7 V7.5 H2 Z M0 7.5 H9 M4.5 7.5 V13" fill="none" stroke="#1E1E1E" stroke-width="1.2"/><path d="M5.5 0.5 V7" stroke="#1E1E1E" stroke-width="1.5"/></svg>
<svg class="a" style="left:1394px;top:80px;" width="11" height="11" viewBox="0 0 11 11"><path d="M1 1 L10 10 M10 1 L1 10" stroke="#1E1E1E" stroke-width="1.5"/></svg>
<svg class="a" style="left:1072px;top:103px;" width="17" height="16" viewBox="0 0 17 16"><rect x="6.5" y="0.5" width="9" height="11" fill="#fff" stroke="#1E1E1E"/><path d="M9 3 H14 M9 5 H14 M9 7 H14 M9 9 H14" stroke="#1E1E1E" stroke-width="0.9"/><path d="M0.5 9 L3 7.5 L7.5 11 L10 9 V15.5 L7.5 14 L3 16 L0.5 14.5 Z M3 10 V13.5 L5 11.8 Z" fill="#865FC5" fill-rule="evenodd"/></svg>
<div class="a" style="left:1096px;top:100px;width:1px;height:22px;background:#CCCEDB"></div>
<svg class="a" style="left:1103px;top:102px;" width="16" height="17" viewBox="0 0 16 17"><path d="M0 0 H6 L3 3.5 Z" fill="#1C6DC1"/><path d="M3 3 V6" stroke="#1C6DC1" stroke-width="1.2"/><circle cx="9.5" cy="10.5" r="5.6" fill="none" stroke="#424242" stroke-width="1.3"/><path d="M9.5 7 V10.5 H12.5" fill="none" stroke="#424242" stroke-width="1.2"/></svg>
<svg class="a" style="left:1126px;top:110px;" width="7" height="4" viewBox="0 0 7 4"><path d="M0 0H7L3.5 4Z" fill="#717171"/></svg>
<svg class="a" style="left:1140px;top:105px;" width="13" height="11" viewBox="0 0 13 11"><path d="M0 3.5 H12 M9 0.5 L12 3.5 M13 7.5 H1 M4 10.5 L1 7.5" fill="none" stroke="#424242" stroke-width="1.2"/></svg>
<svg class="a" style="left:1160px;top:103px;" width="16" height="16" viewBox="0 0 16 16"><rect x="3.5" y="0.6" width="11.5" height="11.5" fill="none" stroke="#424242" stroke-width="1.2"/><rect x="0.6" y="3.5" width="11.5" height="11.5" fill="#EEEEF2" stroke="#424242" stroke-width="1.2"/><path d="M3 9.2 H9.5" stroke="#424242" stroke-width="1.3"/></svg>
<svg class="a" style="left:1183px;top:103px;" width="15" height="15" viewBox="0 0 15 15"><rect x="4.5" y="0.6" width="9.5" height="9.5" fill="none" stroke="#424242" stroke-width="1.2"/><rect x="0.6" y="4.5" width="9.5" height="9.5" fill="#D8D8D8" stroke="#424242" stroke-width="1.2"/></svg>
<div class="a" style="left:1205px;top:100px;width:1px;height:22px;background:#CCCEDB"></div>
<div class="a" style="left:1210px;top:100px;width:22px;height:22px;border:1px solid #3399FF;background:#F5F5F5"></div>
<svg class="a" style="left:1214px;top:104px;" width="14" height="14" viewBox="0 0 14 14"><rect x="0.5" y="0.5" width="3" height="3" fill="none" stroke="#1E1E1E"/><rect x="5" y="5" width="3" height="3" fill="none" stroke="#1E1E1E"/><rect x="9.5" y="9.5" width="3.5" height="3.5" fill="none" stroke="#1E1E1E"/><path d="M3.5 3.5 L5 5 M8 8 L9.5 9.5" stroke="#1E1E1E"/></svg>
<svg class="a" style="left:1235px;top:110px;" width="7" height="4" viewBox="0 0 7 4"><path d="M0 0H7L3.5 4Z" fill="#717171"/></svg>
<div class="a" style="left:1248px;top:100px;width:1px;height:22px;background:#CCCEDB"></div>
<svg class="a" style="left:1254px;top:102px;" width="17" height="17" viewBox="0 0 17 17"><g transform="scale(0.85)"><path d="M3 17.5 L11.2 9.3" stroke="#1E1E1E" stroke-width="4.2" stroke-linecap="round"/><path d="M3 17.5 L11.2 9.3" stroke="#F0F0F0" stroke-width="1.6" stroke-linecap="round"/><path d="M9.5 8.5 A5.2 5.2 0 0 1 15.8 1.6 L13.2 4.6 L14 6.6 L16 7.3 L18.8 4.6 A5.2 5.2 0 0 1 11.6 10.6 Z" fill="#1E1E1E"/></g></svg>
<div class="a" style="left:1274px;top:99px;width:22px;height:24px;border:1px solid #3399FF;background:#F5F5F5"></div>
<svg class="a" style="left:1277px;top:105px;" width="17" height="12" viewBox="0 0 17 12"><path d="M2 9.5 H15 M3 6.5 H13 V9.5 M2 9.5 V9" fill="none" stroke="#1E1E1E" stroke-width="1.2"/><path d="M14 1 V3 M16 3.5 L14.8 4.2 M12 3.5 L13.2 4.2" stroke="#D0B000" stroke-width="1"/></svg>
<div class="a" style="left:1066px;top:125px;width:346px;height:23px;background:#fff;border:1px solid #CCCEDB;border-left:none;border-right:none"></div>
<div class="t" style="left:1071px;top:130px;font-size:12.2px;color:#6D6D6D">搜索解决方案资源管理器(Ctrl+;)</div>
<svg class="a" style="left:1384px;top:129px;" width="12" height="13" viewBox="0 0 12 13"><circle cx="7.5" cy="4.5" r="3.6" fill="none" stroke="#6D6D6D" stroke-width="1.6"/><path d="M5 7.2 L1 11.2" stroke="#6D6D6D" stroke-width="2"/></svg>
<svg class="a" style="left:1402px;top:135px;" width="6" height="4" viewBox="0 0 6 4"><path d="M0 0H6L3.0 4Z" fill="#868686"/></svg>
<div class="a" style="left:1066px;top:148px;width:346px;height:629px;background:#F5F5F5;"></div>
<div class="a" style="left:1066px;top:430px;width:346px;height:20px;background:#CCCEDB;"></div>
<svg class="a" style="left:1081px;top:153px;" width="15" height="15" viewBox="0 0 15 15"><rect x="0.6" y="0.6" width="13.5" height="13.5" fill="#fff" stroke="#424242" stroke-width="1.2"/><path d="M0.6 3.5 H14" stroke="#424242"/><path d="M4.5 8.5 L6.5 7 L9.5 9.5 L12 8 V14 L9.5 13 L6.5 14.5 L4.5 13.5 Z M6.5 9.5 V12 L7.8 10.8 Z" fill="#865FC5" fill-rule="evenodd"/></svg>
<div class="t" style="left:1101px;top:154px;font-size:12.7px;font-weight:bold">解决方案 'Demo' (10 个项目，共 10 个)</div>
<svg class="a" style="left:1076px;top:176px;" width="8" height="8" viewBox="0 0 8 8"><path d="M7 1 V7 H1 Z" fill="#1E1E1E"/></svg>
<svg class="a" style="left:1098px;top:173px;" width="15" height="14" viewBox="0 0 15 14"><path d="M0.5 2.5 H5.5 L7 4 H14.5 V13.5 H0.5 Z" fill="#C5A96A" stroke="#8E7845" stroke-width="1"/><path d="M0.5 5.5 H14.5" stroke="#8E7845" stroke-width="0.8"/></svg>
<div class="tr" style="left:1119px;top:174.5px">src</div>
<svg class="a" style="left:1094px;top:196px;" width="8" height="8" viewBox="0 0 8 8"><path d="M7 1 V7 H1 Z" fill="#1E1E1E"/></svg>
<svg class="a" style="left:1116px;top:193px;" width="15" height="14" viewBox="0 0 15 14"><path d="M0.5 2.5 H5.5 L7 4 H14.5 V13.5 H0.5 Z" fill="#C5A96A" stroke="#8E7845" stroke-width="1"/><path d="M0.5 5.5 H14.5" stroke="#8E7845" stroke-width="0.8"/></svg>
<div class="tr" style="left:1137px;top:194.5px">01-Presentation</div>
<svg class="a" style="left:1112px;top:216px;" width="8" height="8" viewBox="0 0 8 8"><path d="M7 1 V7 H1 Z" fill="#1E1E1E"/></svg>
<svg class="a" style="left:1134px;top:212px;" width="17" height="17" viewBox="0 0 17 17"><rect x="3.5" y="0.6" width="12.5" height="14" fill="#fff" stroke="#424242" stroke-width="1.1"/><path d="M3.5 3.5 H16" stroke="#424242"/><circle cx="5.5" cy="11" r="5" fill="#1C6DC1"/><path d="M0.5 11 H10.5 M5.5 6 V16 M2 8 C4 9 7 9 9 8 M2 14 C4 13 7 13 9 14" stroke="#fff" stroke-width="0.8" fill="none"/></svg>
<div class="tr" style="left:1155px;top:214.5px">Demo.Ui</div>
<svg class="a" style="left:1131px;top:235px;" width="8" height="11" viewBox="0 0 8 11"><path d="M1.5 1.5 L5.8 5.5 L1.5 9.5 Z" fill="none" stroke="#1E1E1E" stroke-width="1.1"/></svg>
<svg class="a" style="left:1152px;top:232px;" width="18" height="16" viewBox="0 0 18 16"><path d="M4 12 C1 12 0.6 9 2 7.5 C2.5 5 5 4 6.5 5 C7.5 2 12 1.5 13.5 4.5 C16.5 4.5 17.5 8 16 10.5 C15.3 11.5 14.5 12 13.5 12" fill="none" stroke="#1C8FC1" stroke-width="1.2"/><path d="M7 8 V11 H11 V8 M9 11 V15 M7.8 6 V8 M10.2 6 V8" fill="none" stroke="#1E8E3E" stroke-width="1.1"/></svg>
<div class="tr" style="left:1173px;top:234.5px">Connected Services</div>
<svg class="a" style="left:1131px;top:255px;" width="8" height="11" viewBox="0 0 8 11"><path d="M1.5 1.5 L5.8 5.5 L1.5 9.5 Z" fill="none" stroke="#1E1E1E" stroke-width="1.1"/></svg>
<svg class="a" style="left:1152px;top:252px;" width="17" height="17" viewBox="0 0 17 17"><path d="M3.5 1.5 H8 L9.5 3 H16 V13.5 H3.5 Z" fill="#C5A96A" stroke="#8E7845"/><path d="M1.5 15.5 L6.5 10.5" stroke="#1E1E1E" stroke-width="2.4" stroke-linecap="round"/><circle cx="7.5" cy="9.5" r="2.8" fill="#1E1E1E"/><circle cx="8.5" cy="8.5" r="1" fill="#C5A96A"/></svg>
<div class="tr" style="left:1173px;top:254.5px">Properties</div>
<svg class="a" style="left:1131px;top:275px;" width="8" height="11" viewBox="0 0 8 11"><path d="M1.5 1.5 L5.8 5.5 L1.5 9.5 Z" fill="none" stroke="#1E1E1E" stroke-width="1.1"/></svg>
<svg class="a" style="left:1152px;top:273px;" width="17" height="14" viewBox="0 0 17 14"><rect x="0.6" y="6.5" width="5" height="5" fill="none" stroke="#1E1E1E" stroke-width="1.1"/><rect x="9" y="1.5" width="6.5" height="6.5" fill="none" stroke="#1E1E1E" stroke-width="1.1"/><path d="M5.5 9 H9 M3 6.5 V3 H9" fill="none" stroke="#1E1E1E" stroke-width="1.1"/></svg>
<div class="tr" style="left:1173px;top:274.5px"><span style="font-size:12px">依赖项</span></div>
<svg class="a" style="left:1131px;top:295px;" width="8" height="11" viewBox="0 0 8 11"><path d="M1.5 1.5 L5.8 5.5 L1.5 9.5 Z" fill="none" stroke="#1E1E1E" stroke-width="1.1"/></svg>
<svg class="a" style="left:1152px;top:293px;" width="15" height="14" viewBox="0 0 15 14"><path d="M0.5 2.5 H5.5 L7 4 H14.5 V13.5 H0.5 Z" fill="#C5A96A" stroke="#8E7845" stroke-width="1"/><path d="M0.5 5.5 H14.5" stroke="#8E7845" stroke-width="0.8"/></svg>
<div class="tr" style="left:1173px;top:294.5px">ClientApp</div>
<svg class="a" style="left:1131px;top:315px;" width="8" height="11" viewBox="0 0 8 11"><path d="M1.5 1.5 L5.8 5.5 L1.5 9.5 Z" fill="none" stroke="#1E1E1E" stroke-width="1.1"/></svg>
<svg class="a" style="left:1152px;top:313px;" width="15" height="14" viewBox="0 0 15 14"><path d="M0.5 2.5 H5.5 L7 4 H14.5 V13.5 H0.5 Z" fill="#C5A96A" stroke="#8E7845" stroke-width="1"/><path d="M0.5 5.5 H14.5" stroke="#8E7845" stroke-width="0.8"/></svg>
<div class="tr" style="left:1173px;top:314.5px">Controllers</div>
<svg class="a" style="left:1130px;top:336px;" width="8" height="8" viewBox="0 0 8 8"><path d="M7 1 V7 H1 Z" fill="#1E1E1E"/></svg>
<svg class="a" style="left:1152px;top:333px;" width="15" height="14" viewBox="0 0 15 14"><path d="M0.5 2.5 H5.5 L7 4 H14.5 V13.5 H0.5 Z" fill="#C5A96A" stroke="#8E7845" stroke-width="1"/><path d="M0.5 5.5 H14.5" stroke="#8E7845" stroke-width="0.8"/></svg>
<div class="tr" style="left:1173px;top:334.5px">Pages</div>
<svg class="a" style="left:1148px;top:356px;" width="8" height="8" viewBox="0 0 8 8"><path d="M7 1 V7 H1 Z" fill="#1E1E1E"/></svg>
<svg class="a" style="left:1170px;top:353px;" width="15" height="14" viewBox="0 0 15 14"><path d="M0.5 2.5 H5.5 L7 4 H14.5 V13.5 H0.5 Z" fill="#C5A96A" stroke="#8E7845" stroke-width="1"/><path d="M0.5 5.5 H14.5" stroke="#8E7845" stroke-width="0.8"/></svg>
<div class="tr" style="left:1191px;top:354.5px">Routes</div>
<svg class="a" style="left:1166px;top:376px;" width="8" height="8" viewBox="0 0 8 8"><path d="M7 1 V7 H1 Z" fill="#1E1E1E"/></svg>
<svg class="a" style="left:1188px;top:373px;" width="15" height="14" viewBox="0 0 15 14"><path d="M0.5 2.5 H5.5 L7 4 H14.5 V13.5 H0.5 Z" fill="#C5A96A" stroke="#8E7845" stroke-width="1"/><path d="M0.5 5.5 H14.5" stroke="#8E7845" stroke-width="0.8"/></svg>
<div class="tr" style="left:1209px;top:374.5px">Demos</div>
<svg class="a" style="left:1184px;top:396px;" width="8" height="8" viewBox="0 0 8 8"><path d="M7 1 V7 H1 Z" fill="#1E1E1E"/></svg>
<svg class="a" style="left:1206px;top:393px;" width="15" height="14" viewBox="0 0 15 14"><path d="M0.5 2.5 H5.5 L7 4 H14.5 V13.5 H0.5 Z" fill="#C5A96A" stroke="#8E7845" stroke-width="1"/><path d="M0.5 5.5 H14.5" stroke="#8E7845" stroke-width="0.8"/></svg>
<div class="tr" style="left:1227px;top:394.5px">Student</div>
<svg class="a" style="left:1224px;top:412px;" width="16" height="16" viewBox="0 0 16 16"><path d="M1.5 0.5 H12 L14.5 3 V15.5 H1.5 Z" fill="#F6F6F6" stroke="#424242" stroke-width="1"/><text x="8" y="12.5" font-family="Liberation Sans" font-size="11" font-weight="bold" fill="#1F7A1F" text-anchor="middle">@</text></svg>
<div class="tr" style="left:1245px;top:414.5px">Detail.cshtml</div>
<svg class="a" style="left:1224px;top:432px;" width="16" height="16" viewBox="0 0 16 16"><path d="M1.5 0.5 H12 L14.5 3 V15.5 H1.5 Z" fill="#F6F6F6" stroke="#424242" stroke-width="1"/><text x="8" y="12.5" font-family="Liberation Sans" font-size="11" font-weight="bold" fill="#1F7A1F" text-anchor="middle">@</text></svg>
<div class="tr" style="left:1245px;top:434.5px">Edit.cshtml</div>
<svg class="a" style="left:1224px;top:452px;" width="16" height="16" viewBox="0 0 16 16"><path d="M1.5 0.5 H12 L14.5 3 V15.5 H1.5 Z" fill="#F6F6F6" stroke="#424242" stroke-width="1"/><text x="8" y="12.5" font-family="Liberation Sans" font-size="11" font-weight="bold" fill="#1F7A1F" text-anchor="middle">@</text></svg>
<div class="tr" style="left:1245px;top:454.5px">Index.cshtml</div>
<svg class="a" style="left:1224px;top:472px;" width="16" height="16" viewBox="0 0 16 16"><path d="M1.5 0.5 H12 L14.5 3 V15.5 H1.5 Z" fill="#F6F6F6" stroke="#424242" stroke-width="1"/><text x="8" y="12.5" font-family="Liberation Sans" font-size="11" font-weight="bold" fill="#1F7A1F" text-anchor="middle">@</text></svg>
<div class="tr" style="left:1245px;top:474.5px">Index.Query.cshtml</div>
<svg class="a" style="left:1170px;top:492px;" width="16" height="16" viewBox="0 0 16 16"><path d="M1.5 0.5 H12 L14.5 3 V15.5 H1.5 Z" fill="#F6F6F6" stroke="#424242" stroke-width="1"/><text x="8" y="12.5" font-family="Liberation Sans" font-size="11" font-weight="bold" fill="#1F7A1F" text-anchor="middle">@</text></svg>
<div class="tr" style="left:1191px;top:494.5px">_ViewImports.cshtml</div>
<svg class="a" style="left:1131px;top:515px;" width="8" height="11" viewBox="0 0 8 11"><path d="M1.5 1.5 L5.8 5.5 L1.5 9.5 Z" fill="none" stroke="#1E1E1E" stroke-width="1.1"/></svg>
<svg class="a" style="left:1152px;top:512px;" width="15" height="16" viewBox="0 0 15 16"><path d="M1.5 0.5 H10 L13.5 4 V15.5 H1.5 Z" fill="#fff" stroke="#424242"/><text x="7.5" y="12" font-family="Liberation Sans" font-size="8" fill="#1E1E1E" text-anchor="middle">{}</text></svg>
<div class="tr" style="left:1173px;top:514.5px">appsettings.json</div>
<svg class="a" style="left:1131px;top:535px;" width="8" height="11" viewBox="0 0 8 11"><path d="M1.5 1.5 L5.8 5.5 L1.5 9.5 Z" fill="none" stroke="#1E1E1E" stroke-width="1.1"/></svg>
<svg class="a" style="left:1152px;top:533px;" width="18" height="13" viewBox="0 0 18 13"><text x="0" y="10.5" font-family="Liberation Sans" font-size="11" font-weight="bold" fill="#1E8E3E">C#</text></svg>
<div class="tr" style="left:1173px;top:534.5px">Program.cs</div>
<svg class="a" style="left:1095px;top:555px;" width="8" height="11" viewBox="0 0 8 11"><path d="M1.5 1.5 L5.8 5.5 L1.5 9.5 Z" fill="none" stroke="#1E1E1E" stroke-width="1.1"/></svg>
<svg class="a" style="left:1116px;top:553px;" width="15" height="14" viewBox="0 0 15 14"><path d="M0.5 2.5 H5.5 L7 4 H14.5 V13.5 H0.5 Z" fill="#C5A96A" stroke="#8E7845" stroke-width="1"/><path d="M0.5 5.5 H14.5" stroke="#8E7845" stroke-width="0.8"/></svg>
<div class="tr" style="left:1137px;top:554.5px">02-Application</div>
<svg class="a" style="left:1095px;top:575px;" width="8" height="11" viewBox="0 0 8 11"><path d="M1.5 1.5 L5.8 5.5 L1.5 9.5 Z" fill="none" stroke="#1E1E1E" stroke-width="1.1"/></svg>
<svg class="a" style="left:1116px;top:573px;" width="15" height="14" viewBox="0 0 15 14"><path d="M0.5 2.5 H5.5 L7 4 H14.5 V13.5 H0.5 Z" fill="#C5A96A" stroke="#8E7845" stroke-width="1"/><path d="M0.5 5.5 H14.5" stroke="#8E7845" stroke-width="0.8"/></svg>
<div class="tr" style="left:1137px;top:574.5px">03-Domain</div>
<svg class="a" style="left:1095px;top:595px;" width="8" height="11" viewBox="0 0 8 11"><path d="M1.5 1.5 L5.8 5.5 L1.5 9.5 Z" fill="none" stroke="#1E1E1E" stroke-width="1.1"/></svg>
<svg class="a" style="left:1116px;top:593px;" width="15" height="14" viewBox="0 0 15 14"><path d="M0.5 2.5 H5.5 L7 4 H14.5 V13.5 H0.5 Z" fill="#C5A96A" stroke="#8E7845" stroke-width="1"/><path d="M0.5 5.5 H14.5" stroke="#8E7845" stroke-width="0.8"/></svg>
<div class="tr" style="left:1137px;top:594.5px">04-Infrastructure</div>
<svg class="a" style="left:1077px;top:615px;" width="8" height="11" viewBox="0 0 8 11"><path d="M1.5 1.5 L5.8 5.5 L1.5 9.5 Z" fill="none" stroke="#1E1E1E" stroke-width="1.1"/></svg>
<svg class="a" style="left:1098px;top:613px;" width="15" height="14" viewBox="0 0 15 14"><path d="M0.5 2.5 H5.5 L7 4 H14.5 V13.5 H0.5 Z" fill="#C5A96A" stroke="#8E7845" stroke-width="1"/><path d="M0.5 5.5 H14.5" stroke="#8E7845" stroke-width="0.8"/></svg>
<div class="tr" style="left:1119px;top:614.5px">test</div>
<div class="a" style="left:1065px;top:778px;width:120px;height:22px;background:#F5F5F5;border:1px solid #CCCEDB;border-top:none"></div>
<div class="a" style="left:1185px;top:778px;width:228px;height:1px;background:#CCCEDB;"></div>
<div class="t" style="left:1070px;top:782px;font-size:12px;color:#0E70C0">解决方案资源管理器</div>
<div class="t" style="left:1191px;top:782px;font-size:12px;color:#444">Git 更改</div>
<div class="a" style="left:0px;top:832px;width:1420px;height:26px;background:#0A6CC0;"></div>
<div class="a" style="left:0px;top:856px;width:1420px;height:2px;background:#5DA3E0;"></div>
<svg class="a" style="left:5px;top:836px;" width="17" height="16" viewBox="0 0 17 16"><path d="M0.8 0.8 H15.2 V12 H10 L8 14.5 L6 12 H0.8 Z" fill="none" stroke="#fff" stroke-width="1.2"/></svg>
<div class="t" style="left:29px;top:838px;color:#fff;font-size:12px">就绪</div>
<svg class="a" style="left:1111px;top:836px;" width="11" height="15" viewBox="0 0 11 15"><path d="M5.5 1 V15 M1 5.5 L5.5 1 L10 5.5" fill="none" stroke="#fff" stroke-width="1.1"/></svg>
<div class="t" style="left:1132px;top:838px;color:#fff;font-size:12px">添加到源代码管理</div>
<svg class="a" style="left:1233px;top:841px;" width="8" height="5" viewBox="0 0 8 5"><path d="M0 5H8L4.0 0Z" fill="#fff"/></svg>
<svg class="a" style="left:1263px;top:837px;" width="15" height="15" viewBox="0 0 15 15"><rect x="1" y="3" width="12.5" height="11" fill="none" stroke="#fff" stroke-width="1.1"/><path d="M1 6 H13.5 M4 0.5 V3 M10.5 0.5 V3" stroke="#fff" stroke-width="1.1"/></svg>
<div class="t" style="left:1286px;top:838px;color:#fff;font-size:12px">选择仓库</div>
<svg class="a" style="left:1339px;top:841px;" width="8" height="5" viewBox="0 0 8 5"><path d="M0 5H8L4.0 0Z" fill="#fff"/></svg>
<svg class="a" style="left:1368px;top:836px;" width="15" height="16" viewBox="0 0 15 16"><path d="M7.5 1.5 C4.5 1.5 3 4 3 7 V11 L1 13 H14 L12 11 V7 C12 4 10.5 1.5 7.5 1.5 Z" fill="none" stroke="#fff" stroke-width="1.1"/></svg>
<div class="t" style="left:1252px;top:832px;color:rgba(200,225,250,0.38);font-size:18px;letter-spacing:-0.6px">@稀土掘金技术社区</div>
<div class="a" style="left:1377px;top:843px;width:12px;height:12px;border-radius:50%;background:#D4232B"></div>
<div class="t" style="left:1381px;top:845px;color:#fff;font-size:8.5px">1</div>
<div class="a" style="left:1412px;top:851px;width:1px;height:1px;background:#BFD9F2;"></div>
<div class="a" style="left:1408px;top:851px;width:1px;height:1px;background:#BFD9F2;"></div>
<div class="a" style="left:1412px;top:847px;width:1px;height:1px;background:#BFD9F2;"></div>
<div class="a" style="left:1404px;top:851px;width:1px;height:1px;background:#BFD9F2;"></div>
<div class="a" style="left:1408px;top:847px;width:1px;height:1px;background:#BFD9F2;"></div>
<div class="a" style="left:1412px;top:843px;width:1px;height:1px;background:#BFD9F2;"></div>
</body></html>
